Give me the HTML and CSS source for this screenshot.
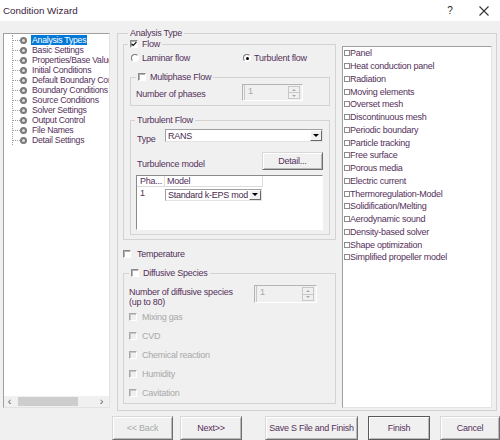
FILE: index.html
```html
<!DOCTYPE html>
<html lang="en">
<head>
    <meta charset="UTF-8">
    <meta name="viewport" content="width=device-width, initial-scale=1.0">
    <title>Condition Wizard</title>
    <link rel="stylesheet" href="styles.css">
</head>
<body>
    <div class="titlebar">
        <span class="title">Condition Wizard</span>
        <span class="help">?</span>
        <span class="close">
            <svg width="10" height="10" viewBox="0 0 10 10"><path d="M0.5 0.5 L9.5 9.5 M9.5 0.5 L0.5 9.5" stroke="#333" stroke-width="1.1" fill="none"/></svg>
        </span>
    </div>

    <div class="content">
        <div class="tree">
            <ul class="tree-items">
                <li class="selected"><span class="node"></span><span class="label">Analysis Types</span></li>
                <li><span class="node"></span><span class="label">Basic Settings</span></li>
                <li><span class="node"></span><span class="label">Properties/Base Values</span></li>
                <li><span class="node"></span><span class="label">Initial Conditions</span></li>
                <li><span class="node"></span><span class="label">Default Boundary Conditions</span></li>
                <li><span class="node"></span><span class="label">Boundary Conditions</span></li>
                <li><span class="node"></span><span class="label">Source Conditions</span></li>
                <li><span class="node"></span><span class="label">Solver Settings</span></li>
                <li><span class="node"></span><span class="label">Output Control</span></li>
                <li><span class="node"></span><span class="label">File Names</span></li>
                <li><span class="node"></span><span class="label">Detail Settings</span></li>
            </ul>
            <div class="hscroll">
                <span class="sarrow">&lsaquo;</span>
                <span class="thumb"></span>
                <span class="sarrow right">&rsaquo;</span>
            </div>
        </div>

        <fieldset class="group analysis">
            <legend>Analysis Type</legend>
            <div class="analysis-body">
                <div class="settings">
                    <fieldset class="group flow">
                        <legend><span class="check checked"><svg width="6" height="6" viewBox="0 0 6 6"><path d="M0.6 2.8 L2.2 4.4 L5.4 1.2" stroke="#000" stroke-width="1.2" fill="none"/></svg></span>Flow</legend>
                        <div class="radios">
                            <label class="radio-item laminar"><span class="radio"></span>Laminar flow</label>
                            <label class="radio-item"><span class="radio on"></span>Turbulent flow</label>
                        </div>

                        <fieldset class="group inner multiphase">
                            <legend><span class="check"></span>Multiphase Flow</legend>
                            <div class="field-row phases">
                                <span class="field-label">Number of phases</span>
                                <span class="spin"><span class="spin-val">1</span><span class="spin-btns"><span class="up"></span><span class="down"></span></span></span>
                            </div>
                        </fieldset>

                        <fieldset class="group inner turbulent">
                            <legend>Turbulent Flow</legend>
                            <div class="type-row">
                                <span class="type-label">Type</span>
                                <div class="combo">RANS<span class="drop"></span></div>
                            </div>
                            <div class="model-row">
                                <span class="model-label">Turbulence model</span>
                                <button class="btn detail">Detail...</button>
                            </div>
                            <div class="grid">
                                <div class="grid-head">
                                    <span class="col-pha">Pha...</span>
                                    <span class="col-model">Model</span>
                                </div>
                                <div class="grid-row">
                                    <span class="cell-pha">1</span>
                                    <div class="combo small">Standard k-EPS mod<span class="drop"></span></div>
                                </div>
                            </div>
                        </fieldset>
                    </fieldset>

                    <div class="check-row temperature"><span class="check"></span>Temperature</div>

                    <fieldset class="group species">
                        <legend><span class="check"></span>Diffusive Species</legend>
                        <div class="field-row species-count">
                            <span class="field-label">Number of diffusive species<br>(up to 80)</span>
                            <span class="spin wide"><span class="spin-val">1</span><span class="spin-btns"><span class="up"></span><span class="down"></span></span></span>
                        </div>
                        <div class="check-row disabled"><span class="check"></span>Mixing gas</div>
                        <div class="check-row disabled"><span class="check"></span>CVD</div>
                        <div class="check-row disabled"><span class="check"></span>Chemical reaction</div>
                        <div class="check-row disabled"><span class="check"></span>Humidity</div>
                        <div class="check-row disabled"><span class="check"></span>Cavitation</div>
                    </fieldset>
                </div>

                <ul class="options">
                    <li><span class="box"></span>Panel</li>
                    <li><span class="box"></span>Heat conduction panel</li>
                    <li><span class="box"></span>Radiation</li>
                    <li><span class="box"></span>Moving elements</li>
                    <li><span class="box"></span>Overset mesh</li>
                    <li><span class="box"></span>Discontinuous mesh</li>
                    <li><span class="box"></span>Periodic boundary</li>
                    <li><span class="box"></span>Particle tracking</li>
                    <li><span class="box"></span>Free surface</li>
                    <li><span class="box"></span>Porous media</li>
                    <li><span class="box"></span>Electric current</li>
                    <li><span class="box"></span>Thermoregulation-Model</li>
                    <li><span class="box"></span>Solidification/Melting</li>
                    <li><span class="box"></span>Aerodynamic sound</li>
                    <li><span class="box"></span>Density-based solver</li>
                    <li><span class="box"></span>Shape optimization</li>
                    <li><span class="box"></span>Simplified propeller model</li>
                </ul>
            </div>
        </fieldset>
    </div>

    <div class="buttons">
        <button class="btn back" disabled>&lt;&lt; Back</button>
        <button class="btn next">Next&gt;&gt;</button>
        <button class="btn save">Save S File and Finish</button>
        <button class="btn finish">Finish</button>
        <button class="btn cancel">Cancel</button>
    </div>
</body>
</html>
```

FILE: styles.css
```css
* {
    box-sizing: border-box;
}
html, body {
    margin: 0;
}
body {
    width: 500px;
    height: 440px;
    overflow: hidden;
    background: #f0f0f0;
    font-family: "Liberation Sans", Arial, sans-serif;
    font-size: 9px;
    letter-spacing: -0.25px;
    color: #55305a;
}

/* title bar */
.titlebar {
    height: 21px;
    background: #fff;
    display: flex;
    align-items: center;
    padding: 0 8px 0 3px;
}
.title {
    flex: 1;
    font-size: 9.8px;
    letter-spacing: 0;
    color: #3c2440;
}
.help {
    width: 12px;
    margin-right: 20px;
    text-align: center;
    font-size: 10px;
    color: #222;
}
.close {
    width: 16px;
    display: flex;
    justify-content: center;
}

/* main area */
.content {
    display: flex;
    align-items: flex-start;
    height: 390px;
    padding-left: 3px;
}

/* left tree */
.tree {
    width: 107px;
    height: 375px;
    margin-top: 12px;
    background: #fff;
    border: 1px solid;
    border-color: #a0a0a0 #e3e3e3 #e3e3e3 #a0a0a0;
    display: flex;
    flex-direction: column;
    overflow: hidden;
}
.tree-items {
    list-style: none;
    margin: 1px 0 0 8px;
    padding: 0;
    border-left: 1px dotted #a0a0a0;
    font-size: 8.7px;
}
.tree-items li {
    display: flex;
    align-items: center;
    height: 10px;
    white-space: nowrap;
}
.tree-items li::before {
    content: "";
    width: 7px;
    flex: none;
    border-top: 1px dotted #a0a0a0;
}
.node {
    flex: none;
    width: 7px;
    height: 7px;
    border-radius: 50%;
    border: 2px solid #7a7a7a;
    background: #dedede;
    margin-right: 4px;
}
.label {
    padding: 0 1px;
    line-height: 10px;
}
.selected .label {
    background: #0078d7;
    color: #fff;
}
.hscroll {
    margin-top: auto;
    height: 11px;
    background: #f0f0f0;
    display: flex;
    align-items: center;
    color: #606060;
    font-size: 11px;
}
.sarrow {
    width: 11px;
    text-align: center;
    line-height: 11px;
}
.sarrow.right {
    margin-left: auto;
    margin-right: 2px;
}
.thumb {
    width: 60px;
    height: 9px;
    margin-left: 3px;
    background: #cdcdcd;
}

/* group boxes */
.group {
    margin: 0;
    padding: 0;
    min-width: 0;
    border: 1px solid #d3d3d3;
}
.group legend {
    display: flex;
    align-items: center;
    gap: 4px;
    padding: 0 2px;
    line-height: 10px;
    height: 10px;
}
.analysis {
    width: 380px;
    height: 383px;
    margin-top: 7px;
    margin-left: 7px;
    padding: 0 4px 0 5px;
}
.analysis > legend {
    margin-left: 5px;
}
.analysis-body {
    display: flex;
    align-items: flex-start;
    gap: 6px;
}
.settings {
    width: 213px;
}

/* checkboxes and radios */
.check {
    flex: none;
    width: 8px;
    height: 8px;
    background: #fff;
    border: 1px solid;
    border-color: #8a8a8a #fff #fff #8a8a8a;
    box-shadow: inset 1px 1px 0 #b0b0b0;
    display: flex;
    align-items: center;
    justify-content: center;
}
.radio {
    flex: none;
    width: 8px;
    height: 8px;
    border-radius: 50%;
    background: #fff;
    border: 1px solid;
    border-color: #7a7a7a #fff #fff #7a7a7a;
    display: flex;
    align-items: center;
    justify-content: center;
}
.radio.on::after {
    content: "";
    width: 3px;
    height: 3px;
    border-radius: 50%;
    background: #000;
}

.flow {
    margin-top: 1px;
}
.flow > legend {
    margin-left: 4px;
}
.radios {
    display: flex;
    align-items: center;
    height: 12px;
    margin-top: 3px;
    padding-left: 7px;
}
.radio-item {
    display: flex;
    align-items: center;
    gap: 3px;
}
.radio-item.laminar {
    width: 112px;
}

.inner {
    width: 200px;
    margin-left: 6px;
}
.multiphase {
    margin-top: 8px;
    padding-bottom: 4px;
}
.multiphase > legend {
    margin-left: 5px;
}
.field-row {
    display: flex;
    align-items: center;
}
.phases {
    margin-top: 2px;
    padding-left: 5px;
}
.phases .field-label {
    width: 106px;
    padding-top: 3px;
}

/* spin boxes */
.spin {
    display: flex;
    width: 61px;
    height: 17px;
    background: #f0f0f0;
    border: 1px solid;
    border-color: #b4b4b4 #fff #fff #b4b4b4;
}
.spin.wide {
    width: 63px;
    height: 18px;
}
.spin-val {
    flex: 1;
    padding: 1px 0 0 3px;
    color: #a8a8a8;
    border-left: 1px solid #c8c8c8;
    margin-left: 1px;
}
.spin-btns {
    width: 12px;
    display: flex;
    flex-direction: column;
    margin: 1px 2px 1px 0;
    border: 1px solid #c8c8c8;
}
.spin-btns span {
    flex: 1;
    display: flex;
    align-items: center;
    justify-content: center;
}
.spin-btns .up {
    border-bottom: 1px solid #c8c8c8;
}
.spin-btns .up::after {
    content: "";
    border-left: 2px solid transparent;
    border-right: 2px solid transparent;
    border-bottom: 2px solid #a8a8a8;
}
.spin-btns .down::after {
    content: "";
    border-left: 2px solid transparent;
    border-right: 2px solid transparent;
    border-top: 2px solid #a8a8a8;
}

/* turbulent flow */
.turbulent {
    margin-top: 9px;
    margin-bottom: 4px;
    padding: 0 6px 4px 0;
}
.turbulent > legend {
    margin-left: 4px;
}
.type-row {
    display: flex;
    margin-top: 4px;
    padding-left: 6px;
}
.type-label {
    width: 28px;
    padding-top: 5px;
}
.combo {
    display: flex;
    align-items: center;
    width: 158px;
    height: 13px;
    padding-left: 2px;
    background: #fff;
    border: 1px solid;
    border-color: #a0a0a0 #e3e3e3 #e3e3e3 #a0a0a0;
    white-space: nowrap;
    color: #4a2a4e;
}
.drop {
    margin-left: auto;
    width: 12px;
    height: 100%;
    background: #f0f0f0;
    border: 1px solid;
    border-color: #fff #696969 #696969 #fff;
    display: flex;
    align-items: center;
    justify-content: center;
}
.drop::after {
    content: "";
    border-left: 3px solid transparent;
    border-right: 3px solid transparent;
    border-top: 3px solid #000;
}
.model-row {
    display: flex;
    margin-top: 8px;
    padding-left: 6px;
}
.model-label {
    padding-top: 7px;
}

/* buttons */
.btn {
    font: inherit;
    letter-spacing: inherit;
    color: inherit;
    padding: 0;
    background: #f0f0f0;
    border: 1px solid;
    border-color: #d8d8d8 #6e6e6e #6e6e6e #d8d8d8;
    box-shadow: inset 1px 1px 0 #fff, inset -1px -1px 0 #b8b8b8;
}
.detail {
    width: 61px;
    height: 18px;
    margin-left: auto;
}

/* turbulence model table */
.grid {
    width: 187px;
    height: 55px;
    margin: 5px 0 0 5px;
    background: #fff;
    border: 1px solid;
    border-color: #8a8a8a #fff #fff #8a8a8a;
}
.grid-head {
    display: flex;
    height: 11px;
    line-height: 10px;
}
.grid-head span {
    border-right: 1px solid #dcdcdc;
    border-bottom: 1px solid #dcdcdc;
}
.col-pha {
    width: 28px;
    padding-left: 3px;
}
.col-model {
    width: 98px;
    padding-left: 2px;
}
.grid-row {
    display: flex;
    align-items: center;
    margin-top: 1px;
}
.cell-pha {
    width: 28px;
    padding: 0 0 3px 3px;
}
.combo.small {
    width: 97px;
    height: 12px;
}

/* temperature and species */
.check-row {
    display: flex;
    align-items: center;
}
.temperature {
    height: 10px;
    margin-top: 9px;
    gap: 6px;
}
.species {
    margin-top: 9px;
    padding-bottom: 1px;
}
.species > legend {
    margin-left: 5px;
}
.species-count {
    align-items: flex-start;
    margin-top: 7px;
    padding-left: 5px;
    height: 22px;
}
.species-count .field-label {
    width: 125px;
    margin-top: 2px;
    line-height: 10px;
}
.check-row.disabled {
    height: 19px;
    padding-left: 5px;
    gap: 5px;
    color: #a8a8a8;
}
.disabled .check {
    background: #f0f0f0;
    border-color: #a8a8a8 #fff #fff #a8a8a8;
    box-shadow: inset 1px 1px 0 #c8c8c8;
}

/* options list */
.options {
    width: 150px;
    height: 362px;
    margin: 8px 0 0;
    padding: 0;
    list-style: none;
    background: #fff;
    border: 1px solid;
    border-color: #a0a0a0 #e3e3e3 #e3e3e3 #a0a0a0;
}
.options li {
    display: flex;
    align-items: center;
    height: 12.75px;
    white-space: nowrap;
}
.box {
    flex: none;
    width: 6px;
    height: 6px;
    margin-left: 1px;
    border: 1px solid #8c8c8c;
    background: #fff;
}

/* bottom buttons */
.buttons {
    display: flex;
    margin-top: 5px;
    padding-left: 112px;
}
.buttons .btn {
    height: 24px;
}
.back {
    width: 61px;
    color: #a8a8a8;
}
.next {
    width: 62px;
    margin-left: 7px;
}
.save {
    width: 93px;
    margin-left: 23px;
}
.finish {
    width: 62px;
    margin-left: 10px;
    border-color: #5a5a5a;
}
.cancel {
    width: 60px;
    margin-left: 10px;
}
```
